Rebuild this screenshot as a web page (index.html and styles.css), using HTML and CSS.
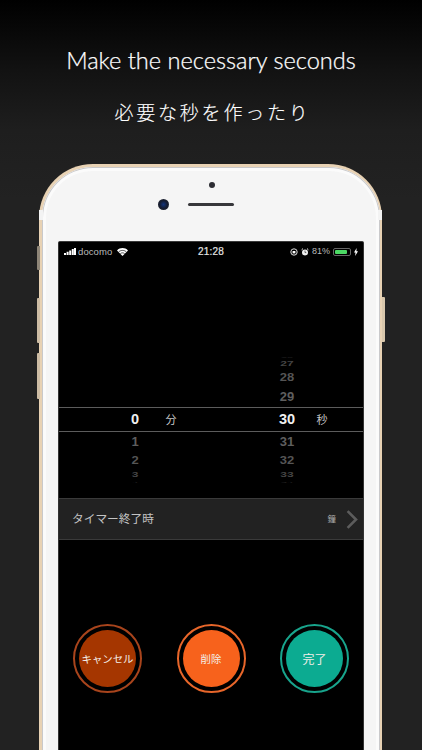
FILE: index.html
```html
<!DOCTYPE html>
<html lang="ja">
<head>
<meta charset="utf-8">
<title>Timer</title>
<link rel="stylesheet" href="styles.css">
</head>
<body>
<main class="page">
  <h1 class="title-en">Make the necessary seconds</h1>
  <h2 class="title-ja">必要な秒を作ったり</h2>
  <div class="phone">
    <span class="side side-mute"></span>
    <span class="side side-up"></span>
    <span class="side side-down"></span>
    <span class="side side-power"></span>
    <span class="band band-left"></span>
    <span class="band band-right"></span>
    <div class="face">
      <div class="sensors">
        <span class="dot"></span>
        <span class="camera"></span>
        <span class="speaker"></span>
      </div>
      <div class="screen">
        <div class="status">
          <div class="status-left">
            <svg class="signal" width="12" height="7" viewBox="0 0 12 7"><path fill="#fff" d="M0 5h2v2H0zM2.6 3.8h2V7h-2zM5.2 2.4h2V7h-2zM7.8 1h2v6h-2zM10 0h2v7h-2z"/></svg>
            <span class="carrier">docomo</span>
            <svg class="wifi" width="11" height="8" viewBox="0 0 11 8"><path fill="#fff" d="M5.5 8 0 2.4C3-.8 8-.8 11 2.4z"/><path fill="none" stroke="#000" stroke-width=".7" d="M1.7 3.9c2.1-2 5.5-2 7.6 0M3.4 5.6c1.2-1 3-1 4.2 0"/></svg>
          </div>
          <span class="clock">21:28</span>
          <div class="status-right">
            <svg width="8" height="8" viewBox="0 0 8 8"><circle cx="4" cy="4" r="3.2" fill="none" stroke="#ddd" stroke-width="1"/><rect x="2.6" y="3" width="2.8" height="2.4" fill="#fff"/></svg>
            <svg width="8" height="8" viewBox="0 0 8 8"><circle cx="4" cy="4.4" r="3" fill="#eee"/><path stroke="#eee" stroke-width="1" d="M.6 1.8 2 .6M7.4 1.8 6 .6"/><path stroke="#333" stroke-width=".7" fill="none" d="M4 2.6v2h1.3"/></svg>
            <span class="pct">81%</span>
            <span class="battery"><span class="battery-fill"></span></span>
            <svg width="4" height="8" viewBox="0 0 4 8"><path fill="#fff" d="M2.6 0 0 4.6h1.5L1.2 8 4 3.2H2.4z"/></svg>
          </div>
        </div>
        <div class="picker">
          <div class="picker-row picker-above">
            <div class="wheel wheel-sec">
              <span class="n n-26">26</span>
              <span class="n n-27">27</span>
              <span class="n n-28">28</span>
              <span class="n n-29">29</span>
            </div>
          </div>
          <div class="picker-row picker-current">
            <span class="now">0</span>
            <span class="unit">分</span>
            <span class="now now-sec">30</span>
            <span class="unit">秒</span>
          </div>
          <div class="picker-row picker-below">
            <div class="wheel wheel-min">
              <span class="n n-29">1</span>
              <span class="n n-28">2</span>
              <span class="n n-27">3</span>
              <span class="n n-26">4</span>
            </div>
            <div class="wheel wheel-sec">
              <span class="n n-29">31</span>
              <span class="n n-28">32</span>
              <span class="n n-27">33</span>
              <span class="n n-26">34</span>
            </div>
          </div>
        </div>
        <div class="sound-row">
          <span class="sound-label">タイマー終了時</span>
          <span class="sound-value">鐘</span>
          <svg class="chevron" width="12" height="19" viewBox="0 0 12 19"><path fill="none" stroke="#5c5c5c" stroke-width="2.6" d="M1.6 1.2 10 9.5l-8.4 8.3"/></svg>
        </div>
        <div class="actions">
          <button class="action action-cancel"><span>キャンセル</span></button>
          <button class="action action-delete"><span>削除</span></button>
          <button class="action action-done"><span>完了</span></button>
        </div>
      </div>
    </div>
  </div>
</main>
</body>
</html>
```
FILE: styles.css
```css
* { box-sizing: border-box; }
html, body { margin: 0; padding: 0; background: #222; }
.page {
  width: 422px;
  height: 750px;
  overflow: hidden;
  display: flex;
  flex-direction: column;
  align-items: center;
  background: linear-gradient(180deg, #000 0, #121212 70px, #1e1e1e 130px, #222 200px, #222 100%);
}
.title-en {
  margin: 44px 0 0;
  height: 32px;
  font: 300 23.6px/32px Lato, "Liberation Sans", sans-serif;
  color: #fff;
  white-space: nowrap;
  -webkit-text-stroke: .25px #fff;
}
.title-ja {
  margin: 21px 0 0;
  height: 30px;
  font: 300 19px/30px "Noto Sans CJK JP", sans-serif;
  letter-spacing: 2.8px;
  padding-left: 3px;
  color: #fff;
  white-space: nowrap;
  -webkit-text-stroke: .15px #fff;
}
.phone {
  position: relative;
  flex: none;
  margin-top: 37px;
  margin-left: -1px;
  width: 343px;
  height: 640px;
  border-radius: 54px;
  background: #e8d2b4;
  padding: 2.5px;
}
.side { position: absolute; width: 3px; background: #cdbca4; border-radius: 1px 0 0 1px; }
.side-mute { left: -2px; top: 82px; height: 24px; background: #8f8678; }
.side-up { left: -2px; top: 134px; height: 45px; }
.side-down { left: -2px; top: 189px; height: 46px; }
.side-power { right: -3px; top: 133px; height: 45px; background: #d8c6ab; border-radius: 0 1px 1px 0; }
.band { position: absolute; top: 46px; width: 4px; height: 10px; background: #f3f3f3; }
.band-left { left: 0; }
.band-right { right: 0; }
.face {
  height: 100%;
  border-radius: 51px;
  background: #f5f5f5;
  box-shadow: inset 0 0 0 1px #c9c9cb, inset 0 0 0 4px #fbfbfb;
  padding: 15.5px 15.5px 0 16.5px;
  display: flex;
  flex-direction: column;
}
.sensors { position: relative; height: 59px; flex: none; }
.dot { position: absolute; left: 151px; top: 0; width: 6px; height: 6px; border-radius: 50%; background: #2c2d33; }
.camera { position: absolute; left: 100px; top: 17px; width: 11px; height: 11px; border-radius: 50%; background: radial-gradient(circle, #12347c 0, #151c30 50%, #2e2f36 100%); }
.speaker { position: absolute; left: 130px; top: 21px; width: 46px; height: 3px; border-radius: 2px; background: #37373b; }
.screen {
  flex: 1;
  background: #000;
  border-top: 1px solid #3a3a3a;
  border-left: 1px solid #333;
  border-right: 1px solid #333;
  border-radius: 2px 2px 0 0;
  display: flex;
  flex-direction: column;
  font-family: "Noto Sans CJK JP", sans-serif;
}
.status {
  height: 19px;
  flex: none;
  display: grid;
  grid-template-columns: 1fr auto 1fr;
  align-items: center;
  padding: 0 5px;
  font: 9.5px/19px "Liberation Sans", sans-serif;
  color: #bbb;
}
.status-left { display: flex; align-items: center; gap: 2px; }
.signal { flex: none; }
.wifi { margin-left: 3px; }
.carrier { letter-spacing: .1px; }
.clock { font-size: 10px; color: #e4e4e4; letter-spacing: .2px; -webkit-text-stroke: .2px #e4e4e4; }
.status-right { display: flex; align-items: center; justify-content: flex-end; gap: 3px; }
.pct { font-size: 9px; }
.battery { width: 18px; height: 8px; border: 1px solid #666; border-radius: 2px; padding: 1px 3px 1px 1px; display: block; }
.battery-fill { display: block; height: 100%; background: #4cd964; border-radius: 1px; }
.picker { flex: none; display: flex; flex-direction: column; }
.picker-row {
  display: grid;
  grid-template-columns: 40px 32px 80px 40px 30px;
  padding-left: 56px;
  justify-items: center;
}
.picker-above { height: 146px; align-items: end; }
.picker-current {
  height: 25px;
  border-top: 1px solid #5c5c5c;
  border-bottom: 1px solid #5c5c5c;
  align-items: center;
}
.picker-below { height: 66px; align-items: start; }
.wheel { display: flex; flex-direction: column; align-items: center; }
.wheel-min { grid-column: 1; }
.wheel-sec { grid-column: 4; }
.now { font: 700 14.5px/23px "Liberation Sans", sans-serif; color: #f0f0f0; }
.now-sec { grid-column: 4; }
.unit { font-size: 11px; line-height: 23px; color: #c8c8c8; }
.n { display: block; font: 700 13px/13px "Liberation Sans", sans-serif; color: #5f5f5f; transform-origin: center; }
.n-29 { height: 20px; line-height: 20px; transform: scaleY(.92); color: #5e5e5e; }
.n-28 { height: 18px; line-height: 18px; transform: scaleY(.8); color: #555; }
.n-27 { height: 10px; line-height: 10px; font-size: 12px; transform: scaleY(.55); color: #444; }
.n-26 { height: 4px; line-height: 4px; font-size: 11px; transform: scaleY(.2); color: #333; overflow: hidden; }
.sound-row {
  flex: none;
  margin: 0;
  height: 42px;
  background: #222;
  border-top: 1px solid #3a3a3a;
  border-bottom: 1px solid #3a3a3a;
  display: flex;
  align-items: center;
  padding: 0 5px 3px 13px;
}
.sound-label { font-size: 11.7px; color: #c4c4c4; flex: 1; white-space: nowrap; }
.sound-value { font-size: 8.5px; color: #aaa; margin-right: 10px; }
.chevron { margin-top: 3px; }
.actions {
  flex: none;
  display: flex;
  justify-content: space-between;
  padding: 84px 14px 0 14px;
}
.action {
  width: 69px;
  height: 69px;
  flex: none;
  padding: 0;
  border-radius: 50%;
  border: 2.5px solid currentColor;
  background: #000;
  display: flex;
  align-items: center;
  justify-content: center;
  font-family: inherit;
}
.action span {
  width: 57px;
  height: 57px;
  flex: none;
  border-radius: 50%;
  display: flex;
  align-items: center;
  justify-content: center;
  color: #f3eee8;
  font-size: 10.4px;
  white-space: nowrap;
}
.action-cancel { color: #a8441c; }
.action-cancel span { background: #a53600; }
.action-delete { color: #e8662a; }
.action-delete span { background: #f7621c; }
.action-done { color: #18a48c; }
.action-done span { background: #0cab91; font-size: 12px; }
```
